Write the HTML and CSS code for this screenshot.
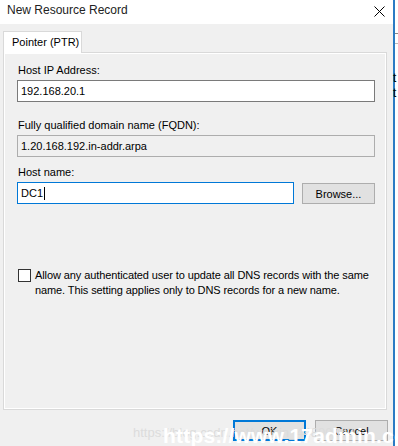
FILE: index.html
```html
<!DOCTYPE html>
<html>
<head>
<meta charset="utf-8">
<link rel="stylesheet" href="styles.css">
</head>
<body>
<div class="screen">
  <div class="dialog">
    <div class="titlebar">
      <span class="title">New Resource Record</span>
      <svg class="close" width="11" height="11" viewBox="0 0 11 11"><path d="M0.5 0.5 L10.5 10.5 M10.5 0.5 L0.5 10.5" stroke="#000" stroke-width="1" fill="none"/></svg>
    </div>
    <div class="body">
      <div class="tabs"><div class="tab">Pointer (PTR)</div></div>
      <div class="panel">
        <div class="label">Host IP Address:</div>
        <div class="input">192.168.20.1</div>
        <div class="label l2">Fully qualified domain name (FQDN):</div>
        <div class="input readonly">1.20.168.192.in-addr.arpa</div>
        <div class="label l3">Host name:</div>
        <div class="row">
          <div class="input focus">DC1<span class="caret"></span></div>
          <div class="btn browse">Browse...</div>
        </div>
        <div class="check">
          <span class="box"></span>
          <span class="check-text">Allow any authenticated user to update all DNS records with the same name. This setting applies only to DNS records for a new name.</span>
        </div>
      </div>
      <div class="buttons">
        <div class="btn ok">OK</div>
        <div class="btn">Cancel</div>
      </div>
    </div>
  </div>
  <div class="edge"></div>
  <div class="behind">
    <div class="mk m1"></div>
    <div class="mk m2"></div>
    <div class="bt t1">t</div>
    <div class="bt">t</div>
  </div>
  <div class="wm-gray">https://blog.csdn.net/weixin_44800000</div>
  <div class="wm-white">https://www.17admin.cc</div>
</div>
</body>
</html>
```
FILE: styles.css
```css
* { box-sizing: border-box; }
html, body { margin: 0; padding: 0; }
body {
  width: 398px;
  height: 446px;
  overflow: hidden;
  font-family: "Liberation Sans", Arial, sans-serif;
  font-size: 11px;
  color: #000;
  background: #f0f0f0;
}
.screen { display: flex; height: 446px; position: relative; }
.dialog {
  width: 393px;
  flex: none;
  display: flex;
  flex-direction: column;
  background: #f0f0f0;
}
.titlebar {
  height: 24px;
  background: #fff;
  display: flex;
  align-items: center;
  justify-content: space-between;
  padding: 0 8px 4px 7px;
  font-size: 12px;
  color: #222;
}
.close { display: block; margin-top: 2px; }
.body {
  flex: 1;
  padding: 7px 0 0 3px;
  display: flex;
  flex-direction: column;
}
.tabs { display: flex; }
.tab {
  width: 79px;
  height: 22px;
  border: 1px solid #d9d9d9;
  border-bottom: none;
  background: #fff;
  padding: 4px 0 0 8px;
  margin-bottom: -1px;
  position: relative;
  z-index: 1;
}
.panel {
  width: 384px;
  height: 358px;
  border: 1px solid #d9d9d9;
  box-shadow: inset 0 0 0 1px #fff;
  padding: 10px 11px 0 13px;
  display: flex;
  flex-direction: column;
}
.label { line-height: 14px; height: 14px; margin-bottom: 3px; padding-left: 1px; }
.l2 { margin-top: 16px; }
.l3 { margin-top: 8px; }
.input {
  height: 22px;
  border: 1px solid #7a7a7a;
  background: #fff;
  padding: 0 3px;
  display: flex;
  align-items: center;
  white-space: nowrap;
}
.readonly { background: #f0f0f0; border-color: #adadad; }
.row { display: flex; gap: 8px; }
.focus { width: 277px; border-color: #0078d7; }
.caret { display: inline-block; width: 1px; height: 13px; background: #000; margin-left: 1px; }
.btn {
  width: 73px;
  height: 21px;
  border: 1px solid #adadad;
  background: #e1e1e1;
  display: flex;
  align-items: center;
  justify-content: center;
}
.browse { margin-top: 1px; }
.check {
  display: flex;
  gap: 4px;
  margin-top: 64px;
  padding-left: 1px;
}
.box {
  width: 13px;
  height: 13px;
  flex: none;
  border: 1px solid #333;
  background: #fff;
  margin-top: 1px;
}
.check-text { line-height: 15px; width: 345px; letter-spacing: -0.1px; }
.buttons {
  display: flex;
  justify-content: flex-end;
  gap: 9px;
  padding: 10px 5px 0 0;
}
.ok { border: 2px solid #0078d7; }
.edge { width: 2px; flex: none; background: #2b7bc4; }
.behind { flex: 1; background: #fff; display: flex; flex-direction: column; }
.mk { height: 1px; background: #888; }
.m1 { margin-top: 33px; }
.m2 { margin-top: 9px; background: #bbb; }
.bt { font-size: 12px; line-height: 15px; margin-left: -2px; }
.t1 { margin-top: 27px; }
.wm-gray {
  position: absolute;
  left: 133px;
  top: 425px;
  font-size: 13px;
  color: #dcdcdc;
  white-space: nowrap;
}
.wm-white {
  position: absolute;
  left: 163px;
  top: 424px;
  font-size: 21px;
  font-weight: bold;
  color: #fff;
  white-space: nowrap;
  letter-spacing: 0.2px;
}
```
